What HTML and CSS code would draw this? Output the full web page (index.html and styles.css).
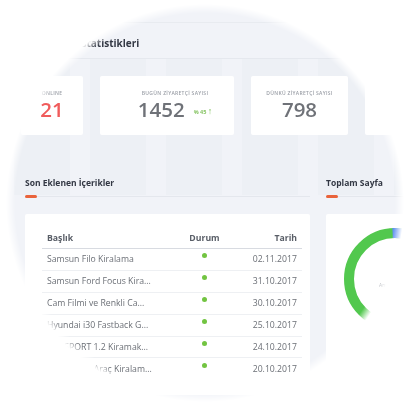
FILE: index.html
```html
<!DOCTYPE html>
<html lang="tr">
<head>
<meta charset="utf-8">
<title>Dashboard</title>
<link rel="stylesheet" href="styles.css">
</head>
<body>
<div class="stage">
  <div class="disc">
    <div class="topbar"></div>
    <div class="stats-head"><h2 class="big-title">Ziyaretçi İstatistikleri</h2></div>
    <div class="stats">
      <div class="stat s1">
        <div class="label">ONLINE</div>
        <div class="value-row"><span class="value red">21</span></div>
      </div>
      <div class="stat s2">
        <div class="label">BUGÜN ZİYARETÇİ SAYISI</div>
        <div class="value-row"><span class="value">1452</span><span class="pct">% 45 <span class="arrow">↑</span></span></div>
      </div>
      <div class="stat s3">
        <div class="label">DÜNKÜ ZİYARETÇİ SAYISI</div>
        <div class="value-row"><span class="value">798</span></div>
      </div>
      <div class="stat s4"></div>
    </div>
    <div class="panels">
      <section class="panel panel-left">
        <div class="panel-head"><h3>Son Eklenen İçerikler</h3></div>
        <div class="card table-card">
          <table class="list">
            <thead>
              <tr><th class="c-title">Başlık</th><th class="c-status">Durum</th><th class="c-date">Tarih</th></tr>
            </thead>
            <tbody>
              <tr><td class="c-title">Samsun Filo Kiralama</td><td class="c-status"><span class="dot"></span></td><td class="c-date">02.11.2017</td></tr>
              <tr><td class="c-title">Samsun Ford Focus Kira...</td><td class="c-status"><span class="dot"></span></td><td class="c-date">31.10.2017</td></tr>
              <tr><td class="c-title">Cam Filmi ve Renkli Ca...</td><td class="c-status"><span class="dot"></span></td><td class="c-date">30.10.2017</td></tr>
              <tr><td class="c-title">Hyundai i30 Fastback G...</td><td class="c-status"><span class="dot"></span></td><td class="c-date">25.10.2017</td></tr>
              <tr><td class="c-title">Clio SPORT 1.2 Kiramak...</td><td class="c-status"><span class="dot"></span></td><td class="c-date">24.10.2017</td></tr>
              <tr><td class="c-title">Samsun'da Araç Kiralam...</td><td class="c-status"><span class="dot"></span></td><td class="c-date">20.10.2017</td></tr>
            </tbody>
          </table>
        </div>
      </section>
      <section class="panel panel-right">
        <div class="panel-head"><h3>Toplam Sayfa</h3></div>
        <div class="card chart-card">
          <svg class="donut" width="150" height="150" viewBox="0 0 150 150">
            <circle cx="69" cy="65" r="46" fill="none" stroke="#52c84e" stroke-width="10"/>
            <path d="M66.6 19.06 A46 46 0 0 1 84.7 21.8" fill="none" stroke="#5e8ff0" stroke-width="10"/>
            <text x="53" y="73" class="donut-label">Anasayfa</text>
          </svg>
        </div>
      </section>
    </div>
  </div>
</div>
</body>
</html>
```

FILE: styles.css
```css
html, body {
  margin: 0;
  padding: 0;
  background: #ffffff;
}

body {
  font-family: "Open Sans", "Liberation Sans", sans-serif;
  color: #6b6f76;
}

.stage {
  width: 410px;
  height: 410px;
  overflow: hidden;
  background: #ffffff;
}

.disc {
  width: 410px;
  height: 410px;
  background-color: #f1f3f8;
  background-image: repeating-linear-gradient(90deg, #edf0f5 0 56px, transparent 56px 76px);
  background-size: 410px 136px;
  background-position: 14px 59px;
  background-repeat: no-repeat;
  -webkit-mask-image: radial-gradient(circle at 205px 203px, #000 190px, transparent 199px);
  mask-image: radial-gradient(circle at 205px 203px, #000 190px, transparent 199px);
}

.topbar {
  height: 22px;
  border-bottom: 1px solid #e8ebf0;
}

.stats-head {
  padding: 13px 0 8px 32px;
  border-bottom: 1px solid #e5e8ee;
  background: #f1f3f8;
}

.big-title {
  margin: 0;
  font-size: 10px;
  line-height: 14px;
  font-weight: 700;
  color: #333844;
}

.stats {
  display: flex;
  gap: 17px;
  padding-left: 21px;
  margin-top: 17px;
}

.stat {
  flex: none;
  height: 59px;
  box-sizing: border-box;
  padding-top: 14px;
  background: #ffffff;
  border-radius: 2px;
  text-align: center;
}

.s1 { width: 62px; }
.s2 { width: 134px; padding-left: 16px; }
.s3 { width: 97px; }
.s4 { width: 80px; }

.label {
  font-size: 5px;
  line-height: 6px;
  font-weight: 600;
  letter-spacing: 0.3px;
  color: #9a9ea6;
}

.value-row {
  margin-top: 2px;
  display: flex;
  justify-content: center;
  align-items: center;
  gap: 9px;
}

.value {
  font-size: 20.5px;
  line-height: 22px;
  font-weight: 600;
  color: #6f7278;
}

.value.red {
  color: #f05b5b;
}

.pct {
  font-size: 5.5px;
  font-weight: 700;
  color: #86c463;
  margin-top: 3px;
}

.arrow {
  font-size: 9px;
  font-weight: 400;
}

.panels {
  display: flex;
  gap: 16px;
  padding-left: 25px;
  margin-top: 42px;
}

.panel-left { width: 285px; flex: none; }
.panel-right { width: 140px; flex: none; }

.panel-head {
  position: relative;
  padding-bottom: 7px;
  border-bottom: 1px solid #e4e7ed;
}

.panel-head h3 {
  margin: 0;
  font-size: 8.5px;
  line-height: 12px;
  font-weight: 700;
  color: #333844;
}

.panel-head::after {
  content: "";
  position: absolute;
  left: 0;
  bottom: -2px;
  width: 12px;
  height: 3px;
  border-radius: 2px;
  background: #e9633b;
}

.card {
  margin-top: 17px;
  height: 181px;
  box-sizing: border-box;
  background: #ffffff;
  border-radius: 2px;
}

.table-card {
  padding: 14px 18px 0 17px;
}

.list {
  width: 250px;
  border-collapse: collapse;
  font-size: 8.7px;
  line-height: 12px;
  table-layout: fixed;
}

.list th {
  padding: 4px 5px;
  font-weight: 700;
  color: #595e67;
  border-bottom: 1px solid #d8dbe1;
}

.list td {
  padding: 4.2px 5px;
  color: #6b6f76;
  white-space: nowrap;
  border-bottom: 1px solid #eef0f3;
}

.list tbody tr:last-child td {
  border-bottom: none;
}

.c-title { width: 120px; text-align: left; }
.c-status { width: 55px; text-align: center; }
.c-date { width: 55px; text-align: right; }

.dot {
  display: inline-block;
  width: 5px;
  height: 5px;
  border-radius: 50%;
  background: #72c441;
  vertical-align: 4.5px;
}

.chart-card {
  padding: 0;
}

.donut {
  display: block;
}

.donut-label {
  font-size: 5px;
  fill: #9a9ea6;
  font-family: "Open Sans", sans-serif;
}
```
